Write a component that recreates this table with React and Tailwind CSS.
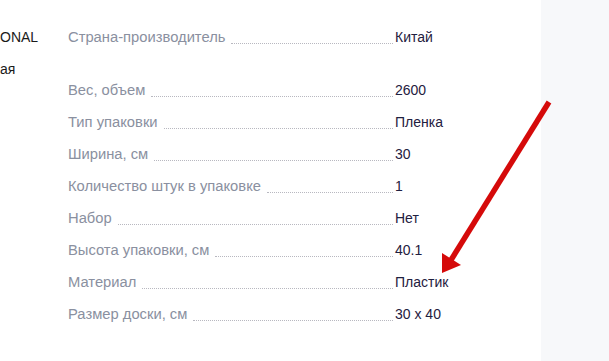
import React from 'react';

const specs = [
    { label: 'Вес, объем', value: '2600' },
    { label: 'Тип упаковки', value: 'Пленка' },
    { label: 'Ширина, см', value: '30' },
    { label: 'Количество штук в упаковке', value: '1' },
    { label: 'Набор', value: 'Нет' },
    { label: 'Высота упаковки, см', value: '40.1' },
    { label: 'Материал', value: 'Пластик' },
    { label: 'Размер доски, см', value: '30 x 40' },
];

function SpecRow({ label, value }) {
    return (
        <div className="flex h-8 items-start">
            <span className="text-[14.75px] leading-8 text-[#8a90a0] whitespace-nowrap">{label}</span>
            <span className="ml-[6px] mr-[2px] h-[23px] flex-1 border-b border-dotted border-[#b8b8c0]" />
            <span className="w-[146px] leading-8 text-[#1f2040] whitespace-nowrap">{value}</span>
        </div>
    );
}

export default function App() {
    return (
        <div
            className="relative flex h-[361px] w-[609px] overflow-hidden bg-white text-[14px]"
            style={{ fontFamily: '"Liberation Sans", Arial, sans-serif' }}
        >
            <div className="flex w-[541px] pt-[21px]">
                {/* обрезанная колонка слева */}
                <div className="w-[68px] leading-8 text-[#1a1a1a]">
                    <div>ONAL</div>
                    <div>ая</div>
                </div>

                <div className="flex-1">
                    <SpecRow label="Страна-производитель" value="Китай" />
                    <div className="mt-[21px]">
                        {specs.map(s => (
                            <SpecRow key={s.label} label={s.label} value={s.value} />
                        ))}
                    </div>
                </div>
            </div>

            <div className="flex-1 bg-[#f7f8fa]" />

            {/* стрелка-указатель */}
            <svg className="absolute left-0 top-0" width="609" height="361" viewBox="0 0 609 361">
                <line x1="549" y1="102" x2="451" y2="260" stroke="#d50a0a" strokeWidth="5.5" />
                <polygon points="442,273 442,253 461,265" fill="#d50a0a" />
            </svg>
        </div>
    );
}
